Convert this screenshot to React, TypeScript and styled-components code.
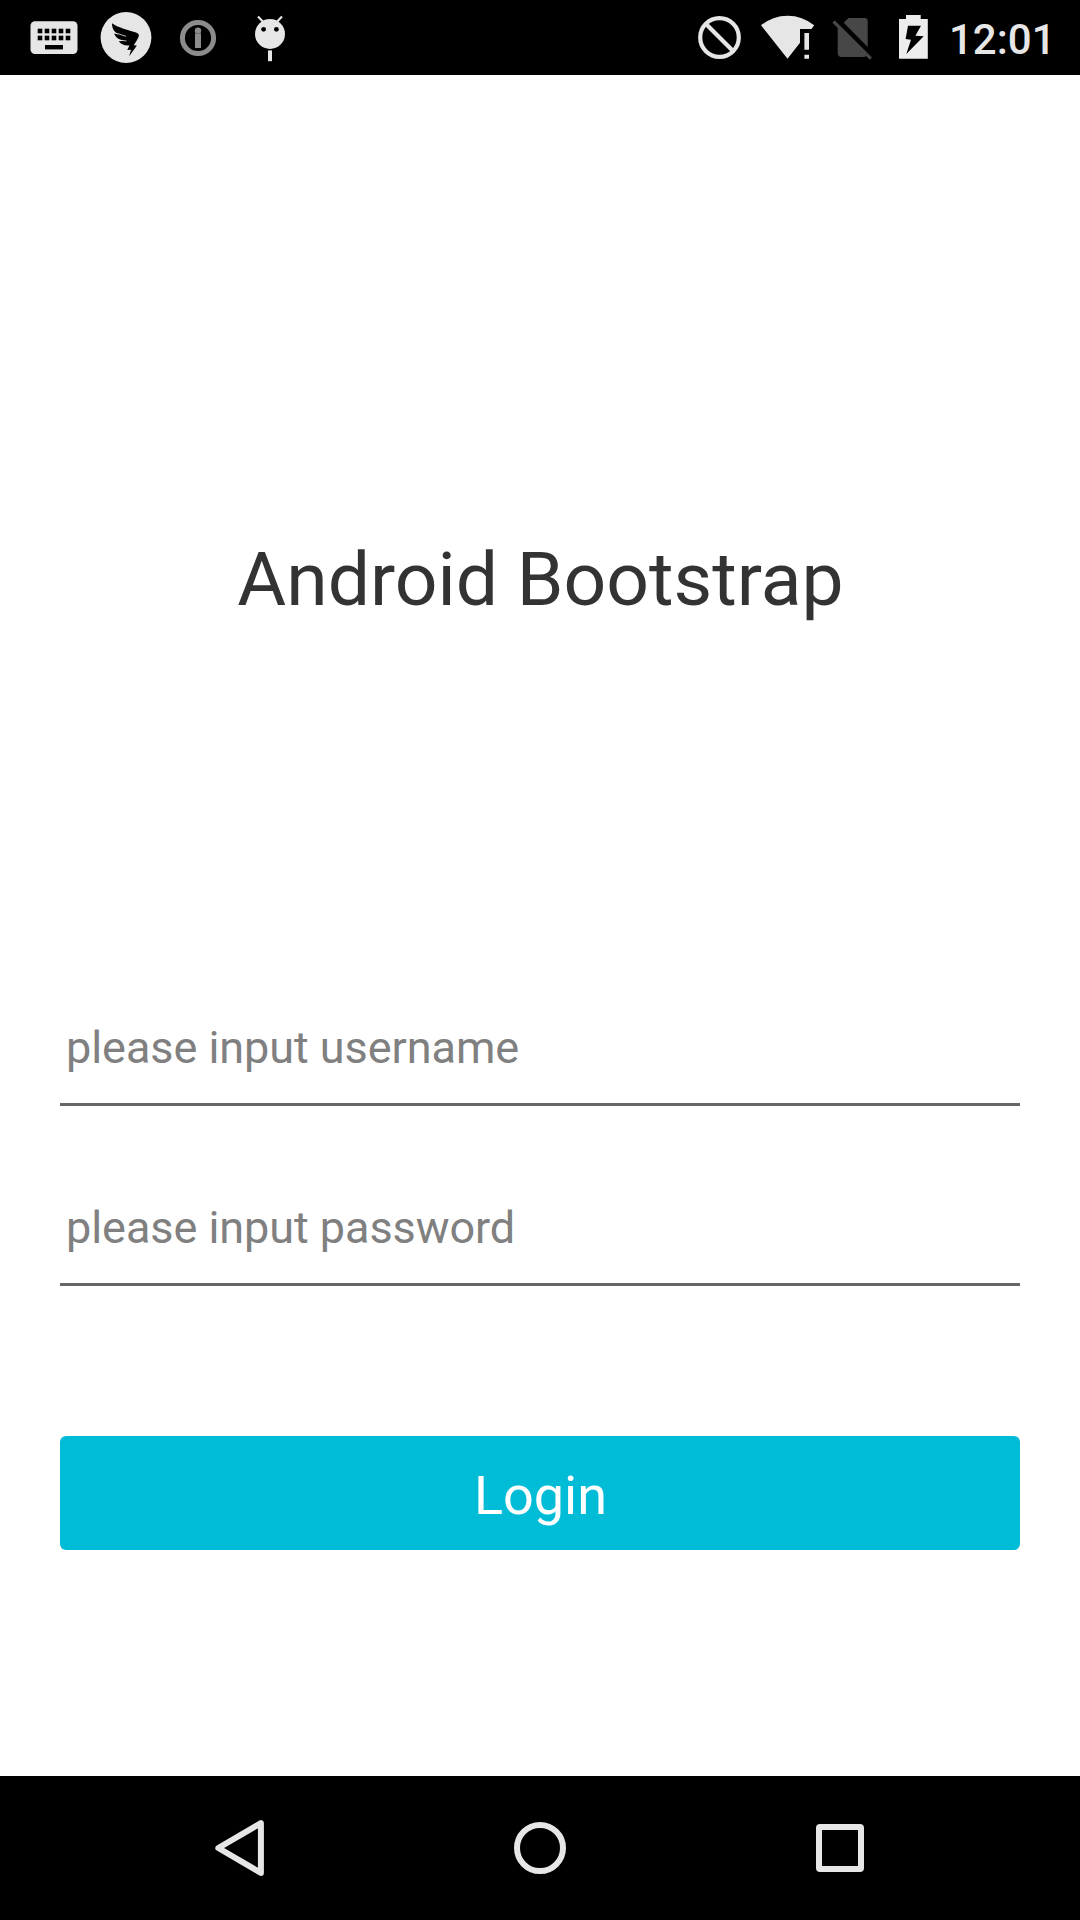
import React from "react";
import styled, { createGlobalStyle } from "styled-components";

const GlobalStyle = createGlobalStyle`
  *, *::before, *::after { box-sizing: border-box; }
  html, body { margin: 0; padding: 0; background: #fff; }
  body { font-family: Roboto, "Noto Sans", sans-serif; }
`;

const Screen = styled.div`
  display: flex;
  flex-direction: column;
  width: 1080px;
  height: 1920px;
  background: #fff;
  overflow: hidden;
`;

const StatusBar = styled.header`
  display: flex;
  justify-content: space-between;
  height: 75px;
  padding: 0 29px 0 18px;
  background: #000;
`;

const IconGroup = styled.div`
  display: flex;
`;

const Icon = styled.svg`
  display: block;
  flex: none;
`;

const Clock = styled.time`
  width: 102px;
  margin-left: 7px;
  padding-top: 15px;
  font-size: 42px;
  font-weight: 500;
  line-height: 49px;
  color: #e6e6e6;
  white-space: nowrap;
`;

const Content = styled.main`
  flex: 1;
  display: flex;
  flex-direction: column;
  padding: 0 60px;
`;

const Title = styled.h1`
  margin: 460px 0 361px;
  padding-left: 1px;
  font-size: 75px;
  font-weight: 400;
  line-height: 88px;
  letter-spacing: 0.02px;
  text-align: center;
  color: #333;
`;

const Form = styled.form`
  display: flex;
  flex-direction: column;
`;

const Field = styled.input`
  height: 122px;
  margin: 0 0 58px;
  padding: 37px 6px 29px;
  border: 0;
  border-bottom: 3px solid #666;
  border-radius: 0;
  outline: 0;
  background: transparent;
  font-family: inherit;
  font-size: 45px;
  line-height: 53px;
  letter-spacing: -0.06px;
  color: #333;

  &::placeholder {
    color: #808080;
    opacity: 1;
  }
`;

const LoginButton = styled.button`
  height: 114px;
  margin-top: 92px;
  padding: 6px 0 0 1px;
  border: 0;
  border-radius: 6px;
  background: #00bcd7;
  font-family: inherit;
  font-size: 54px;
  line-height: 64px;
  color: #fff;
`;

const NavBar = styled.nav`
  display: flex;
  justify-content: center;
  height: 144px;
  background: #000;
`;

const NavButton = styled.button`
  width: 300px;
  padding: 0;
  border: 0;
  background: none;
`;

const LIGHT = "#e6e6e6";

/* Status icons share the bar's coordinate space, each showing its own slice. */
function StatusIcon({ x, width, children }: { x: number; width: number; children: React.ReactNode }) {
  return (
    <Icon width={width} height={75} viewBox={`${x} 0 ${width} 75`} aria-hidden="true">
      {children}
    </Icon>
  );
}

const keys = [40, 47, 54, 61, 68].flatMap((x) => [31, 38].map((y) => ({ x, y })));

export default function App() {
  return (
    <Screen>
      <GlobalStyle />
      <StatusBar>
        <IconGroup>
          <StatusIcon x={18} width={72}>
            <rect x="30.5" y="21.3" width="47" height="32.7" rx="4.5" fill={LIGHT} />
            {keys.map((k) => (
              <rect key={`${k.x}-${k.y}`} x={k.x - 2.3} y={k.y - 2.3} width="4.6" height="4.6" />
            ))}
            <rect x="45" y="45" width="18" height="4.4" />
          </StatusIcon>
          <StatusIcon x={90} width={72}>
            <circle cx="126" cy="37.5" r="25.4" fill={LIGHT} />
            <path d="M112 23.3C118 27.8 127 29.6 136 32.5Q139.4 33.6 138.8 36Q138 39 133.7 45.3L136.9 45.5L129.2 56.2L131 49.8L127.2 50L129.5 45.4C125 46 120.5 44.3 118.8 41.3L123.7 41C119 40 115.3 37.4 114.2 33.6L119 34.8C114 32 112 28.6 112 23.3Z" />
            <path d="M116 33.1L126 36.3M119.5 40.1L126.5 41" stroke={LIGHT} strokeWidth="0.8" fill="none" />
          </StatusIcon>
          <StatusIcon x={162} width={72}>
            <circle cx="198" cy="38" r="15.6" fill="none" stroke="#8c8c8c" strokeWidth="5" />
            <circle cx="198" cy="30.8" r="3.2" fill="#8c8c8c" />
            <rect x="195" y="33.4" width="6" height="14.6" fill="#8c8c8c" />
            <path d="M195 33.4H201" stroke="#666" strokeWidth="0.7" />
          </StatusIcon>
          <StatusIcon x={234} width={72}>
            <path d="M258 16.6L263.5 22.2M282 16.6L276.5 22.2" stroke={LIGHT} strokeWidth="2.2" />
            <circle cx="270" cy="34" r="15" fill={LIGHT} />
            <circle cx="263.6" cy="29.3" r="2.4" />
            <circle cx="276.4" cy="29.3" r="2.4" />
            <rect x="268" y="50.4" width="4" height="10.8" fill={LIGHT} />
          </StatusIcon>
        </IconGroup>
        <IconGroup>
          <StatusIcon x={690} width={60}>
            <circle cx="719.5" cy="37.5" r="19.3" fill="none" stroke={LIGHT} strokeWidth="4.2" />
            <path d="M706 24L733 51" stroke={LIGHT} strokeWidth="4.2" />
          </StatusIcon>
          <StatusIcon x={750} width={72}>
            <path d="M761 25.3A41.7 41.7 0 0 1 814.2 25.3L811.5 29H800V42.8L787.5 58.8Z" fill={LIGHT} />
            <path d="M804.4 33H809V49.8H804.4ZM804.4 54.7H809V58.8H804.4Z" fill={LIGHT} />
          </StatusIcon>
          <StatusIcon x={822} width={60}>
            <path d="M843.7 22.7L848.4 18H864.7Q867.7 18 867.7 21V47Z" fill="#474747" />
            <path d="M837.7 25.7L866.8 55Q866 57 864 57H841.7Q837.7 57 837.7 53Z" fill="#474747" />
            <path d="M833.5 21.5L870.9 58.7" stroke="#474747" strokeWidth="3.2" />
          </StatusIcon>
          <StatusIcon x={882} width={60}>
            <path d="M906 15H920.7V19H927.8V58.8H899V19H906Z" fill="#ededed" />
            <path d="M908 25.7H921L915.4 35.8L923.7 36.3L906.3 54L911 39.7L905.6 39Z" />
          </StatusIcon>
          <Clock>12:01</Clock>
        </IconGroup>
      </StatusBar>
      <Content>
        <Title>Android Bootstrap</Title>
        <Form onSubmit={(e) => e.preventDefault()}>
          <Field type="text" placeholder="please input username" />
          <Field type="password" placeholder="please input password" />
          <LoginButton type="submit">Login</LoginButton>
        </Form>
      </Content>
      <NavBar>
        <NavButton aria-label="Back">
          <Icon width={300} height={144} viewBox="90 1776 300 144">
            <path d="M218.3 1848L260.9 1823.1V1872.9Z" fill="none" stroke={LIGHT} strokeWidth="6" strokeLinejoin="round" />
          </Icon>
        </NavButton>
        <NavButton aria-label="Home">
          <Icon width={300} height={144} viewBox="390 1776 300 144">
            <circle cx="540" cy="1848" r="23" fill="none" stroke={LIGHT} strokeWidth="6" />
          </Icon>
        </NavButton>
        <NavButton aria-label="Recent apps">
          <Icon width={300} height={144} viewBox="690 1776 300 144">
            <path fillRule="evenodd" d="M820 1824H860A4 4 0 0 1 864 1828V1868A4 4 0 0 1 860 1872H820A4 4 0 0 1 816 1868V1828A4 4 0 0 1 820 1824ZM822 1830V1866H858V1830Z" fill={LIGHT} />
          </Icon>
        </NavButton>
      </NavBar>
    </Screen>
  );
}
